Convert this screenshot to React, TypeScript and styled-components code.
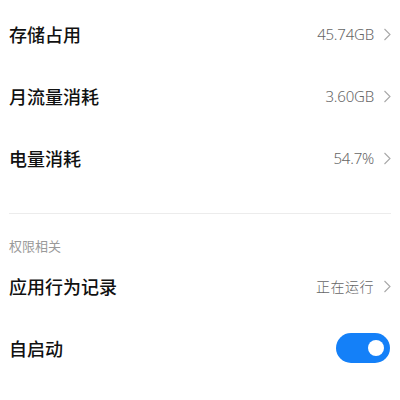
import React from "react";
import styled, { createGlobalStyle } from "styled-components";

const GlobalStyle = createGlobalStyle`
  body {
    margin: 0;
    background: #ffffff;
    font-family: "Noto Sans", "Noto Sans CJK SC", sans-serif;
  }
`;

const StyledPage = styled.div`
  width: 400px;
  height: 400px;
  overflow: hidden;
  padding: 3px 9px 0 9px;
  box-sizing: border-box;
  display: flex;
  flex-direction: column;
`;

const StyledRow = styled.div`
  height: 62px;
  display: flex;
  align-items: center;
  justify-content: space-between;
`;

const StyledTitle = styled.span`
  font-family: "Noto Sans CJK SC", sans-serif;
  font-size: 18px;
  font-weight: 500;
  color: #111111;
`;

const StyledRight = styled.div`
  display: flex;
  align-items: center;
  gap: 9px;
`;

const StyledValue = styled.span<{ $cjk?: boolean }>`
  font-family: ${p =>
    p.$cjk ? `"Noto Sans CJK SC", sans-serif` : `"Noto Sans", sans-serif`};
  font-size: ${p => (p.$cjk ? "14px" : "15px")};
  font-weight: 300;
  color: #666666;
  letter-spacing: ${p => (p.$cjk ? "0.5px" : "-0.2px")};
`;

const StyledDivider = styled.div`
  height: 1px;
  background: #ececec;
  margin-top: 24px;
`;

const StyledSection = styled.div`
  font-family: "Noto Sans CJK SC", sans-serif;
  font-size: 13px;
  line-height: 20px;
  color: #9a9a9a;
  margin-top: 22px;
  margin-bottom: -1px;
`;

const StyledSwitch = styled.div<{ $on: boolean }>`
  width: 54px;
  height: 30px;
  border-radius: 15px;
  background: ${p => (p.$on ? "#1480f8" : "#dddddd")};
  display: flex;
  align-items: center;
  justify-content: ${p => (p.$on ? "flex-end" : "flex-start")};
  padding: 0 6px;
  box-sizing: border-box;
  margin-right: 1px;
`;

const StyledKnob = styled.div`
  width: 16px;
  height: 16px;
  border-radius: 50%;
  background: #ffffff;
`;

const Chevron = () => (
  <svg width="8" height="13" viewBox="0 0 8 13">
    <path
      d="M1.5 1 L7 6.5 L1.5 12"
      fill="none"
      stroke="#a8a8a8"
      strokeWidth="1.1"
    />
  </svg>
);

interface RowProps {
  title: string;
  value: string;
  cjk?: boolean;
}

const InfoRow: React.FC<RowProps> = ({ title, value, cjk }) => (
  <StyledRow>
    <StyledTitle>{title}</StyledTitle>
    <StyledRight>
      <StyledValue $cjk={cjk}>{value}</StyledValue>
      <Chevron />
    </StyledRight>
  </StyledRow>
);

const App: React.FC = () => {
  return (
    <>
      <GlobalStyle />
      <StyledPage>
        <InfoRow title="存储占用" value="45.74GB" />
        <InfoRow title="月流量消耗" value="3.60GB" />
        <InfoRow title="电量消耗" value="54.7%" />
        <StyledDivider />
        <StyledSection>权限相关</StyledSection>
        <InfoRow title="应用行为记录" value="正在运行" cjk />
        <StyledRow>
          <StyledTitle>自启动</StyledTitle>
          <StyledSwitch $on>
            <StyledKnob />
          </StyledSwitch>
        </StyledRow>
      </StyledPage>
    </>
  );
};

export default App;
